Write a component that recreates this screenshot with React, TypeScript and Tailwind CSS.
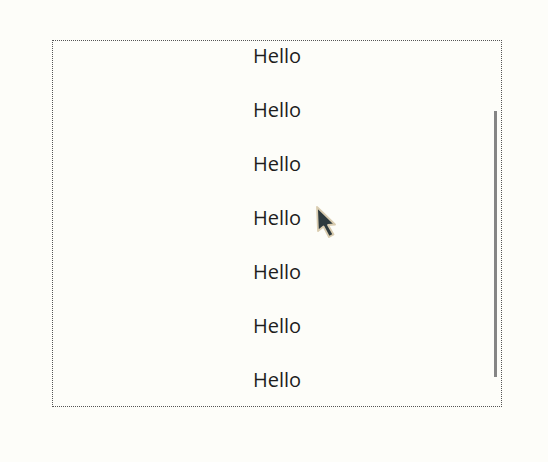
const rows = Array.from({ length: 7 }, () => 'Hello');

function Pointer() {
  return (
    <svg
      className="absolute left-[313px] top-[204px]"
      width="26"
      height="38"
      viewBox="0 0 26 38"
    >
      <path
        d="M4 3 L5 27 L10.5 22.5 L16 33 L20.5 30.5 L15 21 L22 20.5 Z"
        fill="#2e3a3e"
        stroke="#d9ccb0"
        strokeWidth="1.8"
        strokeLinejoin="round"
      />
    </svg>
  );
}

export default function App() {
  return (
    <div className="relative w-[548px] h-[462px] bg-[#fdfdf9] font-['Open_Sans',sans-serif]">
      <div className="absolute left-[52px] top-[40px] w-[450px] h-[367px] border border-dotted border-[#555] overflow-hidden">
        <div className="flex flex-col items-center -mt-[12px]">
          {rows.map((text, i) => (
            <div key={i} className="h-[54px] flex items-center justify-center text-[20px] text-[#1e1e1e] leading-none">
              <span className="-mt-[1px]">{text}</span>
            </div>
          ))}
        </div>
        <div className="absolute left-[441px] top-[70px] w-[3px] h-[266px] bg-[#858585]" />
      </div>
      <Pointer />
    </div>
  );
}
